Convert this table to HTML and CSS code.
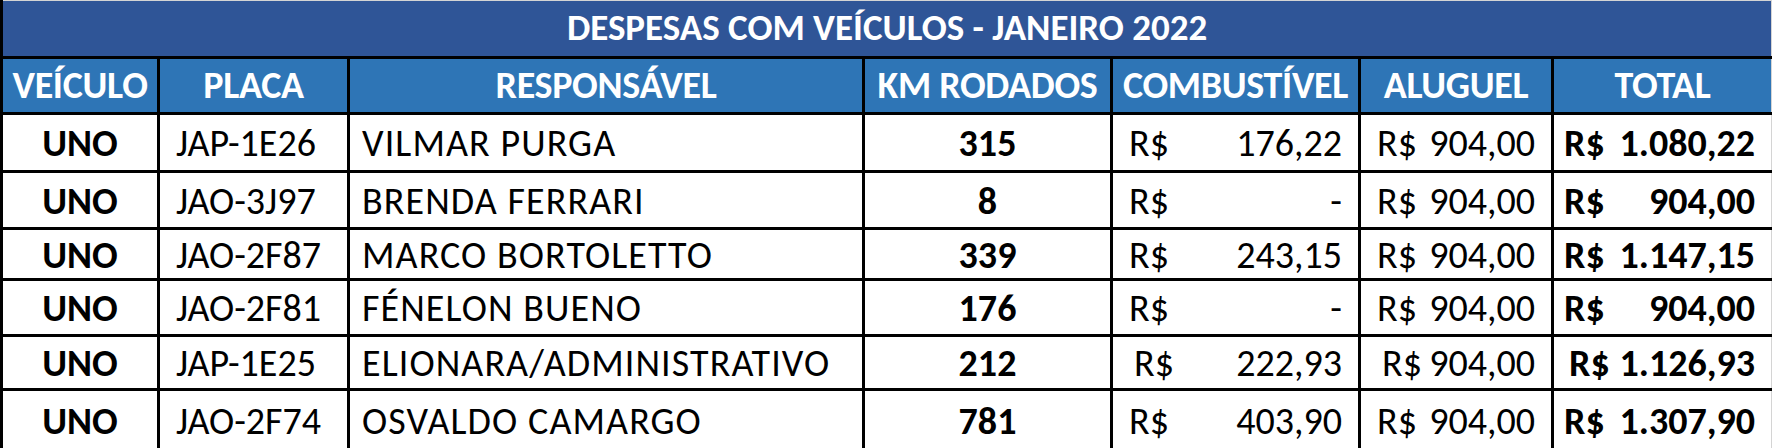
FILE: index.html
```html
<!DOCTYPE html>
<html lang="pt-BR">
<head>
    <meta charset="UTF-8">
    <title>Despesas com Veículos - Janeiro 2022</title>
    <link rel="stylesheet" href="styles.css">
</head>
<body>
    <table class="planilha">
        <colgroup>
            <col class="c-veiculo">
            <col class="c-placa">
            <col class="c-resp">
            <col class="c-km">
            <col class="c-comb">
            <col class="c-aluguel">
            <col class="c-total">
        </colgroup>
        <thead>
            <tr class="titulo">
                <th colspan="7">DESPESAS COM VEÍCULOS - JANEIRO 2022</th>
            </tr>
            <tr class="cabecalho">
                <th>VEÍCULO</th>
                <th>PLACA</th>
                <th>RESPONSÁVEL</th>
                <th>KM RODADOS</th>
                <th>COMBUSTÍVEL</th>
                <th>ALUGUEL</th>
                <th>TOTAL</th>
            </tr>
        </thead>
        <tbody>
            <tr class="r1">
                <td class="veiculo">UNO</td>
                <td class="placa">JAP-1E26</td>
                <td class="resp">VILMAR PURGA</td>
                <td class="km">315</td>
                <td><div class="moeda"><span>R$</span><span>176,22</span></div></td>
                <td><div class="moeda"><span>R$</span><span>904,00</span></div></td>
                <td class="total"><div class="moeda"><span>R$</span><span>1.080,22</span></div></td>
            </tr>
            <tr class="r2">
                <td class="veiculo">UNO</td>
                <td class="placa">JAO-3J97</td>
                <td class="resp">BRENDA FERRARI</td>
                <td class="km">8</td>
                <td><div class="moeda"><span>R$</span><span>-</span></div></td>
                <td><div class="moeda"><span>R$</span><span>904,00</span></div></td>
                <td class="total"><div class="moeda"><span>R$</span><span>904,00</span></div></td>
            </tr>
            <tr class="r3">
                <td class="veiculo">UNO</td>
                <td class="placa">JAO-2F87</td>
                <td class="resp">MARCO BORTOLETTO</td>
                <td class="km">339</td>
                <td><div class="moeda"><span>R$</span><span>243,15</span></div></td>
                <td><div class="moeda"><span>R$</span><span>904,00</span></div></td>
                <td class="total"><div class="moeda"><span>R$</span><span>1.147,15</span></div></td>
            </tr>
            <tr class="r4">
                <td class="veiculo">UNO</td>
                <td class="placa">JAO-2F81</td>
                <td class="resp">FÉNELON BUENO</td>
                <td class="km">176</td>
                <td><div class="moeda"><span>R$</span><span>-</span></div></td>
                <td><div class="moeda"><span>R$</span><span>904,00</span></div></td>
                <td class="total"><div class="moeda"><span>R$</span><span>904,00</span></div></td>
            </tr>
            <tr class="r5">
                <td class="veiculo">UNO</td>
                <td class="placa">JAP-1E25</td>
                <td class="resp">ELIONARA/ADMINISTRATIVO</td>
                <td class="km">212</td>
                <td><div class="moeda recuo"><span>R$</span><span>222,93</span></div></td>
                <td><div class="moeda recuo"><span>R$</span><span>904,00</span></div></td>
                <td class="total"><div class="moeda recuo"><span>R$</span><span>1.126,93</span></div></td>
            </tr>
            <tr class="r6">
                <td class="veiculo">UNO</td>
                <td class="placa">JAO-2F74</td>
                <td class="resp">OSVALDO CAMARGO</td>
                <td class="km">781</td>
                <td><div class="moeda"><span>R$</span><span>403,90</span></div></td>
                <td><div class="moeda"><span>R$</span><span>904,00</span></div></td>
                <td class="total"><div class="moeda"><span>R$</span><span>1.307,90</span></div></td>
            </tr>
        </tbody>
    </table>
</body>
</html>
```

FILE: styles.css
```css
body {
    margin: 0;
    background-color: #fff;
    font-family: Carlito, Lato, "Open Sans", sans-serif;
    overflow: hidden;
}

.planilha {
    width: 1770px;
    border-collapse: collapse;
    table-layout: fixed;
    border-top: 1px solid #d4d4d4;
    border-right: 1px solid #d4d4d4;
}

.c-veiculo { width: 157px; }
.c-placa { width: 190px; }
.c-resp { width: 515px; }
.c-km { width: 248px; }
.c-comb { width: 248px; }
.c-aluguel { width: 193px; }
.c-total { width: 219px; }

th, td {
    border: 3px solid #000;
    padding: 0 14px;
    font-size: 38px;
    line-height: 1.1;
    color: #000;
    white-space: nowrap;
    overflow: hidden;
}

.planilha tr td:last-child,
.planilha tr th:last-child {
    border-right: 1px solid #d4d4d4;
}

/* titulo mesclado */
.titulo th {
    height: 55px;
    background-color: #2f5597;
    color: #fff;
    font-weight: bold;
    font-size: 37px;
    border-top: none;
    text-align: center;
}

.cabecalho th {
    height: 53px;
    background-color: #2e75b6;
    color: #fff;
    font-weight: bold;
    text-align: center;
    padding: 0;
    letter-spacing: -0.3px;
}

tbody td {
    vertical-align: middle;
    padding-top: 3px;
}

.r1 td { height: 52px; }
.r2 td { height: 51px; }
.r3 td { height: 45px; }
.r4 td { height: 50px; }
.r5 td { height: 48px; }
.r6 td { height: 55px; }

.veiculo,
.km {
    text-align: center;
    font-weight: bold;
}

.placa {
    padding-left: 16px;
}

.resp {
    padding-left: 12px;
    letter-spacing: 1.1px;
}

.moeda {
    display: flex;
    justify-content: space-between;
    padding: 0 2px;
}

.moeda.recuo {
    padding-left: 7px;
}

.total {
    padding-left: 8px;
    font-weight: bold;
}
```
